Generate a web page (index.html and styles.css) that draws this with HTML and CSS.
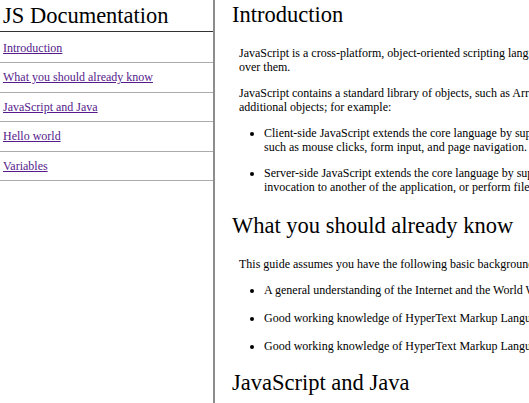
FILE: index.html
```html
<!DOCTYPE html>
<html lang="en">
<head>
<meta charset="utf-8">
<title>JS Documentation</title>
<link rel="stylesheet" href="styles.css">
</head>
<body>
<div class="page">
  <nav class="navbar">
    <header class="nav-title">JS Documentation</header>
    <ul class="nav-list">
      <li><a class="nav-link" href="#Introduction">Introduction</a></li>
      <li><a class="nav-link" href="#What_you_should_already_know">What you should already know</a></li>
      <li><a class="nav-link" href="#JavaScript_and_Java">JavaScript and Java</a></li>
      <li><a class="nav-link" href="#Hello_world">Hello world</a></li>
      <li><a class="nav-link" href="#Variables">Variables</a></li>
    </ul>
  </nav>
  <main class="main">
    <section class="doc-section" id="Introduction">
      <header class="sec-title">Introduction</header>
      <article class="sec-body">
        <p>JavaScript is a cross-platform, object-oriented scripting language. It is a small and lightweight language. Inside a host environment (for example, a web browser), JavaScript can be connected to the objects of its environment to provide programmatic control<br>over them.</p>
        <p>JavaScript contains a standard library of objects, such as Array, Date, and Math, and a core set of language elements such as operators, control structures, and statements. Core JavaScript can be extended for a variety of purposes by supplementing it with<br>additional objects; for example:</p>
        <ul class="bullets compact">
          <li>Client-side JavaScript extends the core language by supplying objects to control a browser and its Document Object Model (DOM). For example, client-side extensions allow an application to place elements on an HTML form and respond to user events<br>such as mouse clicks, form input, and page navigation.</li>
          <li>Server-side JavaScript extends the core language by supplying objects relevant to running JavaScript on a server. For example, server-side extensions allow an application to communicate with a database, provide continuity of information from one<br>invocation to another of the application, or perform file manipulations on a server.</li>
        </ul>
      </article>
    </section>
    <section class="doc-section" id="What_you_should_already_know">
      <header class="sec-title">What you should already know</header>
      <article class="sec-body">
        <p>This guide assumes you have the following basic background:</p>
        <ul class="bullets">
          <li>A general understanding of the Internet and the World Wide Web (WWW).</li>
          <li>Good working knowledge of HyperText Markup Language (HTML).</li>
          <li>Good working knowledge of HyperText Markup Language (HTML).</li>
        </ul>
      </article>
    </section>
    <section class="doc-section" id="JavaScript_and_Java">
      <header class="sec-title">JavaScript and Java</header>
      <article class="sec-body">
        <p>JavaScript and Java are similar in some ways but fundamentally different in some others.</p>
      </article>
    </section>
  </main>
</div>
</body>
</html>
```

FILE: styles.css
```css
html, body {
  margin: 0;
  padding: 0;
}

body {
  font-family: "Liberation Serif", "Times New Roman", serif;
  font-size: 12px;
  color: #000;
  background: #fff;
  overflow: hidden;
}

.page {
  display: flex;
  align-items: stretch;
  height: 100vh;
  overflow: hidden;
}

.navbar {
  flex: 0 0 213px;
  width: 213px;
  border-right: 2px solid #8c8c8c;
}

.nav-title {
  font-size: 22.5px;
  line-height: 31px;
  padding: 0 3px;
  border-bottom: 1.5px solid #333;
}

.nav-list {
  list-style: none;
  margin: 0;
  padding: 1.5px 0 0;
}

.nav-list li {
  border-bottom: 1px solid #ababab;
  padding: 7.25px 3px;
  line-height: 14px;
}

.nav-link {
  color: #551a8b;
}

.main {
  flex: 1;
  min-width: 0;
  overflow: hidden;
  padding: 2px 0 0 17px;
}

.sec-title {
  font-size: 22.5px;
  line-height: 26px;
  white-space: nowrap;
}

.sec-body {
  padding-top: 6px;
  padding-left: 7px;
  line-height: 14px;
  white-space: nowrap;
}

.sec-body p {
  margin: 12px 0;
}

.bullets {
  margin: 11px 0 17px;
  padding-left: 25px;
}

.bullets li + li {
  margin-top: 14px;
}

.bullets.compact {
  margin: 12px 0 19px;
}

.bullets.compact li + li {
  margin-top: 12px;
}
```
